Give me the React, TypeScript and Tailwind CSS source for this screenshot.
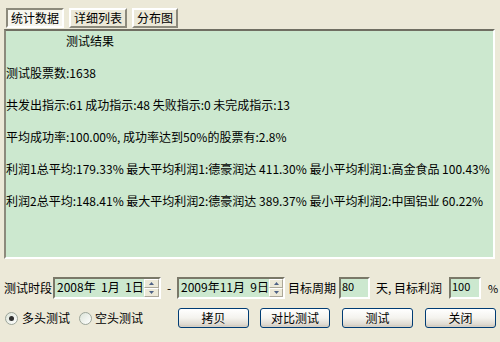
import React from "react";

const font = "font-['Noto_Sans_CJK_SC','Noto_Sans',sans-serif]";

const Spin = () => (
  <div className="flex flex-col w-[16px] h-full">
    <div className="flex-1 flex items-center justify-center bg-[#ECE9D8] border border-t-white border-l-white border-r-[#ACA899] border-b-[#ACA899]">
      <svg width="5" height="3" viewBox="0 0 5 3"><path d="M2.5 0 L5 3 L0 3 Z" fill="#4D6185" /></svg>
    </div>
    <div className="flex-1 flex items-center justify-center bg-[#ECE9D8] border border-t-white border-l-white border-r-[#ACA899] border-b-[#ACA899]">
      <svg width="5" height="3" viewBox="0 0 5 3"><path d="M0 0 L5 0 L2.5 3 Z" fill="#4D6185" /></svg>
    </div>
  </div>
);

const DateBox = ({ text }: { text: string }) => (
  <div className="flex w-[108px] h-[22px] border-2 border-t-[#7A7868] border-l-[#7A7868] border-b-white border-r-white">
    <div className="flex-1 bg-[#CCE8CF] pl-[2px] leading-[16px] text-[12px] whitespace-pre">{text}</div>
    <Spin />
  </div>
);

const NumBox = ({ text, w }: { text: string; w: string }) => (
  <div className={`${w} h-[22px] bg-[#CCE8CF] border-2 border-t-[#7A7868] border-l-[#7A7868] border-b-white border-r-white pl-[1px] text-[11px] leading-[14px]`}>
    {text}
  </div>
);

const Btn = ({ label, w, ml }: { label: string; w: string; ml: string }) => (
  <button className={`${w} ${ml} h-[20px] rounded-[3px] border border-[#003C74] bg-gradient-to-b from-white via-[#F4F3EE] to-[#D6D0C5] text-[12px] leading-[16px] text-black shadow-[inset_0_-2px_0_#D6D0C5]`}>
    {label}
  </button>
);

const Radio = ({ checked }: { checked?: boolean }) => (
  <div className="w-[13px] h-[13px] rounded-full border border-[#9CA59A] bg-gradient-to-br from-[#DCE4D8] to-white flex items-center justify-center">
    {checked && <div className="w-[5px] h-[5px] rounded-full bg-[#2F2F2F]" />}
  </div>
);

export default function App() {
  const lines = [
    "测试股票数:1638",
    "共发出指示:61 成功指示:48 失败指示:0 未完成指示:13",
    "平均成功率:100.00%, 成功率达到50%的股票有:2.8%",
    "利润1总平均:179.33% 最大平均利润1:德豪润达 411.30% 最小平均利润1:高金食品 100.43%",
    "利润2总平均:148.41% 最大平均利润2:德豪润达 389.37% 最小平均利润2:中国铝业 60.22%",
  ];

  return (
    <div className={`w-[500px] h-[342px] bg-[#ECE9D8] overflow-hidden text-black ${font}`}>
      {/* Tabs */}
      <div className="flex pt-[8px] pl-[6px] gap-[5px] h-[29px]">
        <div className="w-[58px] h-[20px] bg-[#F7F6EE] border-2 border-t-[#8C8A7C] border-l-[#8C8A7C] border-b-white border-r-white text-[12px] leading-[16px] text-center">统计数据</div>
        <div className="w-[58px] h-[20px] bg-[#ECE9D8] border-2 border-t-white border-l-white border-b-[#8C8A7C] border-r-[#8C8A7C] text-[12px] leading-[16px] text-center">详细列表</div>
        <div className="w-[46px] h-[20px] bg-[#ECE9D8] border-2 border-t-white border-l-white border-b-[#8C8A7C] border-r-[#8C8A7C] text-[12px] leading-[16px] text-center">分布图</div>
      </div>

      {/* Result panel */}
      <div className="ml-[4px] w-[491px] h-[230px] bg-[#CCE8CF] border-2 border-t-[#6F6E62] border-l-[#8C8A7C] border-b-white border-r-white pt-[2px] text-[12px] leading-[16px]">
        <div className="pl-[60px]">测试结果</div>
        {lines.map((l) => (
          <div key={l}>
            <div className="h-[16px]" />
            <div className="whitespace-pre">{l}</div>
          </div>
        ))}
      </div>

      {/* Parameters row */}
      <div className="flex items-center mt-[18px] h-[22px] text-[12px]">
        <span className="ml-[4px] w-[49px]">测试时段</span>
        <DateBox text="2008年  1月  1日" />
        <span className="w-[16px] text-center">-</span>
        <DateBox text="2009年11月  9日" />
        <span className="ml-[3px] w-[51px]">目标周期</span>
        <NumBox text="80" w="w-[31px]" />
        <span className="ml-[6px] w-[73px] whitespace-pre">天, 目标利润</span>
        <NumBox text="100" w="w-[32px]" />
        <span className="ml-[7px] text-[11px]">%</span>
      </div>

      {/* Direction + buttons */}
      <div className="flex items-center mt-[9px] h-[20px] text-[12px]">
        <div className="ml-[5px]"><Radio checked /></div>
        <span className="ml-[4px] w-[57px]">多头测试</span>
        <Radio />
        <span className="ml-[3px] w-[50px]">空头测试</span>
        <Btn label="拷贝" w="w-[71px]" ml="ml-[33px]" />
        <Btn label="对比测试" w="w-[70px]" ml="ml-[11px]" />
        <Btn label="测试" w="w-[71px]" ml="ml-[12px]" />
        <Btn label="关闭" w="w-[71px]" ml="ml-[12px]" />
      </div>
    </div>
  );
}
